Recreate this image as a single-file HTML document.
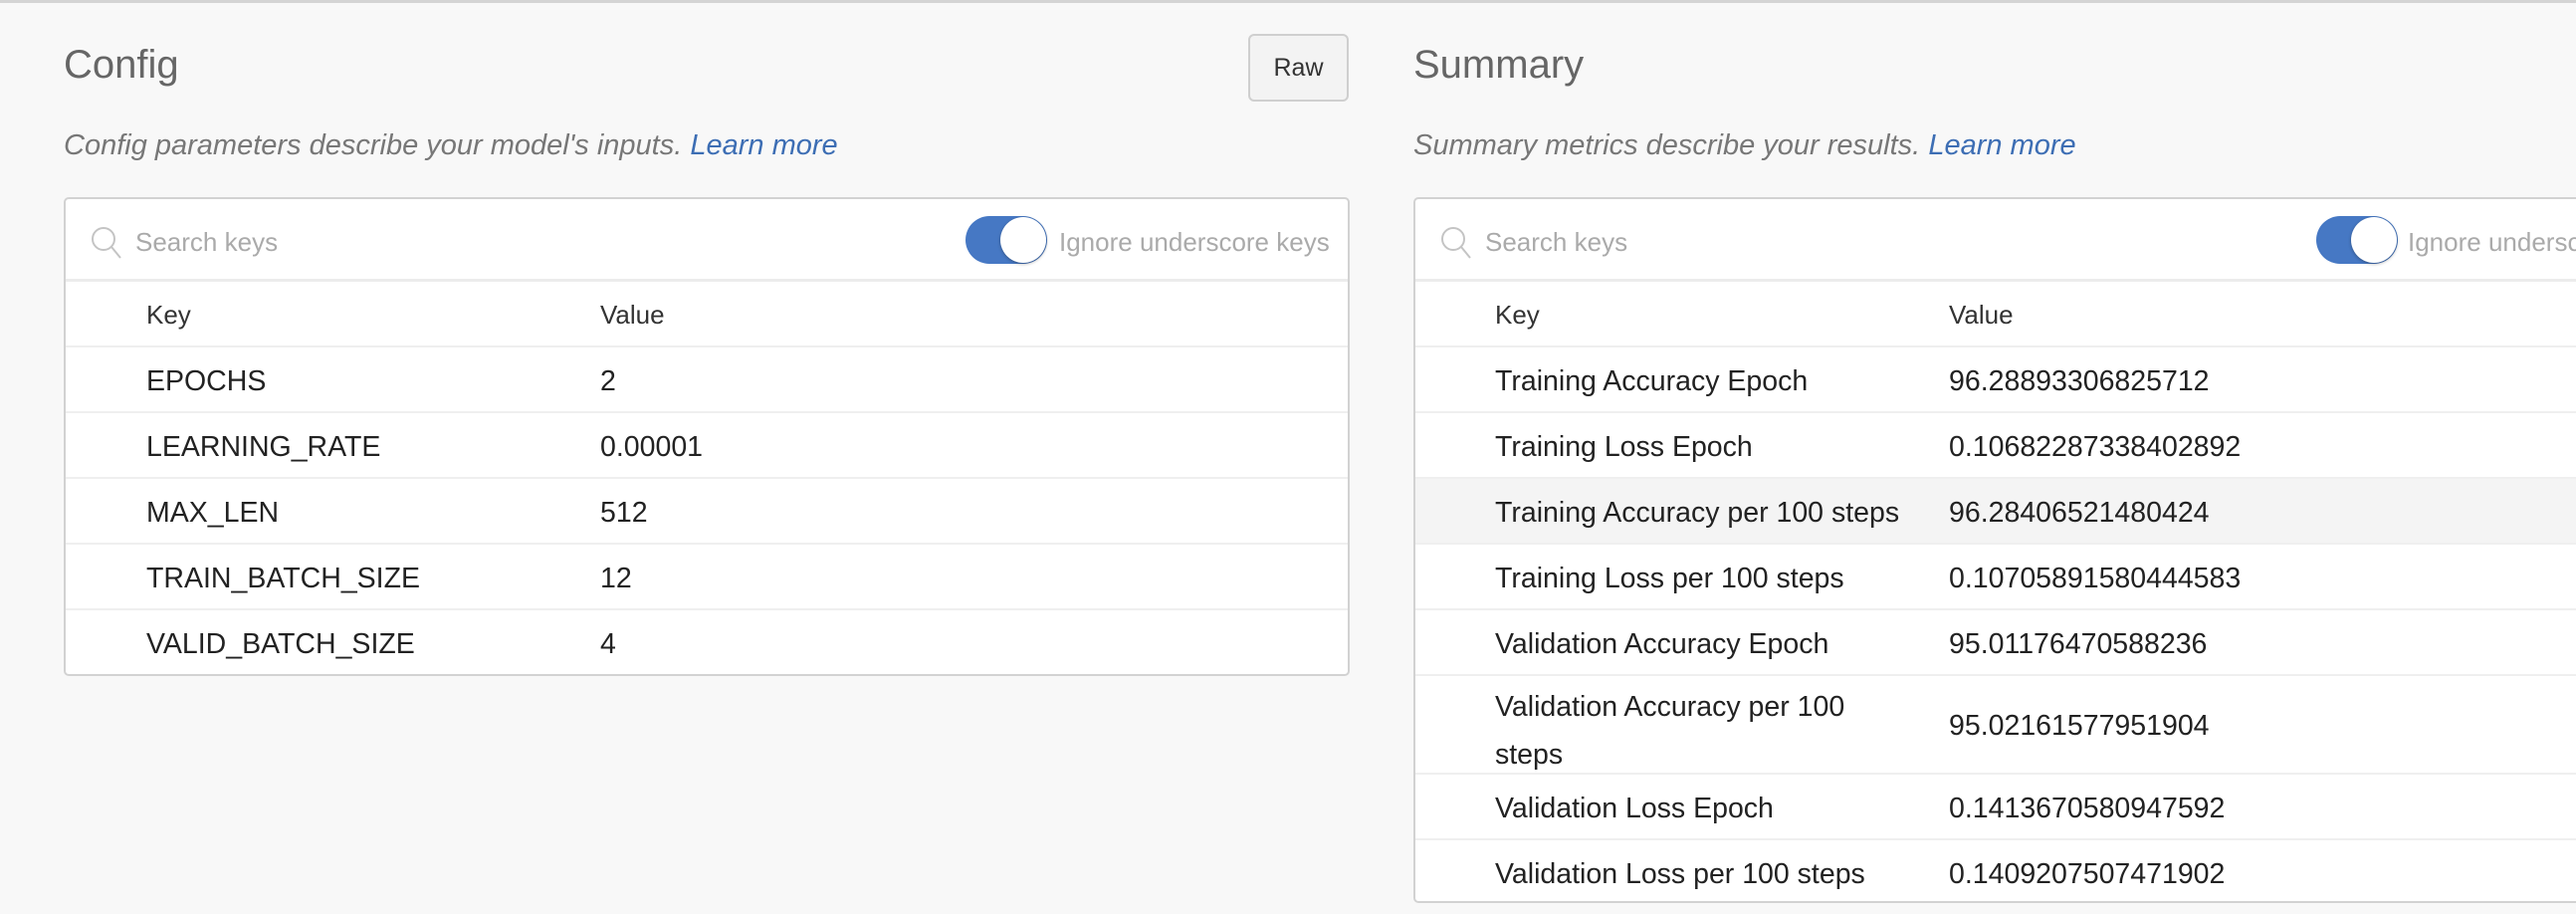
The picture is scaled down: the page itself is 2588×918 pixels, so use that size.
<!DOCTYPE html>
<html><head><meta charset="utf-8"><style>
*{margin:0;padding:0;box-sizing:border-box}
body{width:2588px;height:918px;background:#f8f8f8;font-family:"Liberation Sans",sans-serif;position:relative;overflow:hidden}
.line{position:absolute;left:0;top:0;width:2588px;height:3px;background:#d4d4d4}
.a{position:absolute;white-space:nowrap}
.title{font-size:40px;color:#666;top:43px}
.desc{font-size:29px;color:#777;font-style:italic;top:130px}
.desc span{color:#3d6eb4}
.raw{left:1254px;top:34px;width:101px;height:68px;border:2px solid #cfcfcf;border-radius:6px;background:#f3f3f3;font-size:25px;color:#333;text-align:center;line-height:64px}
.card{position:absolute;top:198px;background:#fff;border:2px solid #d2d2d2;border-radius:5px;overflow:hidden}
.srch{position:absolute;left:0;right:0;top:0;height:83px;border-bottom:3px solid #ececec}
.st{position:absolute;top:28px;font-size:26px;color:#aaa;white-space:nowrap}
.tog{position:absolute;top:17px;width:82px;height:48px;border-radius:24px;background:#4678c4}
.tog:after{content:"";position:absolute;right:1px;top:1px;width:46px;height:46px;border-radius:50%;background:#fff;box-shadow:0 1px 3px rgba(0,0,0,.35)}
.row{position:absolute;left:0;right:0;height:66px;border-bottom:2px solid #efefef;font-size:28.5px;color:#222}
.row div{position:absolute;top:18px;white-space:nowrap}
.hd{font-size:26px;color:#333}
</style></head><body>
<div class="line"></div>
<div class="a title" style="left:64px">Config</div>
<div class="a raw">Raw</div>
<div class="a desc" style="left:64px">Config parameters describe your model's inputs. <span>Learn more</span></div>

<div class="card" style="left:64px;width:1292px;height:481px">
 <div class="srch">
  <svg style="position:absolute;left:24px;top:26px" width="34" height="36" viewBox="0 0 34 36"><circle cx="14" cy="14" r="11" fill="none" stroke="#c4c4c4" stroke-width="2"/><line x1="22" y1="22" x2="31" y2="33" stroke="#c4c4c4" stroke-width="2"/></svg>
  <div class="st" style="left:70px">Search keys</div>
  <div class="tog" style="left:904px"></div>
  <div class="st" style="left:998px">Ignore underscore keys</div>
 </div>
 <div class="row hd" style="top:83px"><div style="left:81px">Key</div><div style="left:537px">Value</div></div>
 <div class="row" style="top:149px"><div style="left:81px">EPOCHS</div><div style="left:537px">2</div></div>
 <div class="row" style="top:215px"><div style="left:81px">LEARNING_RATE</div><div style="left:537px">0.00001</div></div>
 <div class="row" style="top:281px"><div style="left:81px">MAX_LEN</div><div style="left:537px">512</div></div>
 <div class="row" style="top:347px"><div style="left:81px">TRAIN_BATCH_SIZE</div><div style="left:537px">12</div></div>
 <div class="row" style="top:413px;border-bottom:none"><div style="left:81px">VALID_BATCH_SIZE</div><div style="left:537px">4</div></div>
</div>

<div class="a title" style="left:1420px">Summary</div>
<div class="a desc" style="left:1420px">Summary metrics describe your results. <span>Learn more</span></div>

<div class="card" style="left:1420px;width:1200px;height:709px">
 <div class="srch">
  <svg style="position:absolute;left:24px;top:26px" width="34" height="36" viewBox="0 0 34 36"><circle cx="14" cy="14" r="11" fill="none" stroke="#c4c4c4" stroke-width="2"/><line x1="22" y1="22" x2="31" y2="33" stroke="#c4c4c4" stroke-width="2"/></svg>
  <div class="st" style="left:70px">Search keys</div>
  <div class="tog" style="left:905px"></div>
  <div class="st" style="left:997px">Ignore underscore keys</div>
 </div>
 <div class="row hd" style="top:83px"><div style="left:80px">Key</div><div style="left:536px">Value</div></div>
 <div class="row" style="top:149px"><div style="left:80px">Training Accuracy Epoch</div><div style="left:536px">96.28893306825712</div></div>
 <div class="row" style="top:215px"><div style="left:80px">Training Loss Epoch</div><div style="left:536px">0.10682287338402892</div></div>
 <div class="row" style="top:281px;background:#f4f4f4"><div style="left:80px">Training Accuracy per 100 steps</div><div style="left:536px">96.28406521480424</div></div>
 <div class="row" style="top:347px"><div style="left:80px">Training Loss per 100 steps</div><div style="left:536px">0.10705891580444583</div></div>
 <div class="row" style="top:413px"><div style="left:80px">Validation Accuracy Epoch</div><div style="left:536px">95.01176470588236</div></div>
 <div class="row" style="top:479px;height:99px"><div style="left:80px;top:7px;line-height:48px">Validation Accuracy per 100<br>steps</div><div style="left:536px;top:34px">95.02161577951904</div></div>
 <div class="row" style="top:578px"><div style="left:80px">Validation Loss Epoch</div><div style="left:536px">0.1413670580947592</div></div>
 <div class="row" style="top:644px;border-bottom:none"><div style="left:80px">Validation Loss per 100 steps</div><div style="left:536px">0.1409207507471902</div></div>
</div>
</body></html>
